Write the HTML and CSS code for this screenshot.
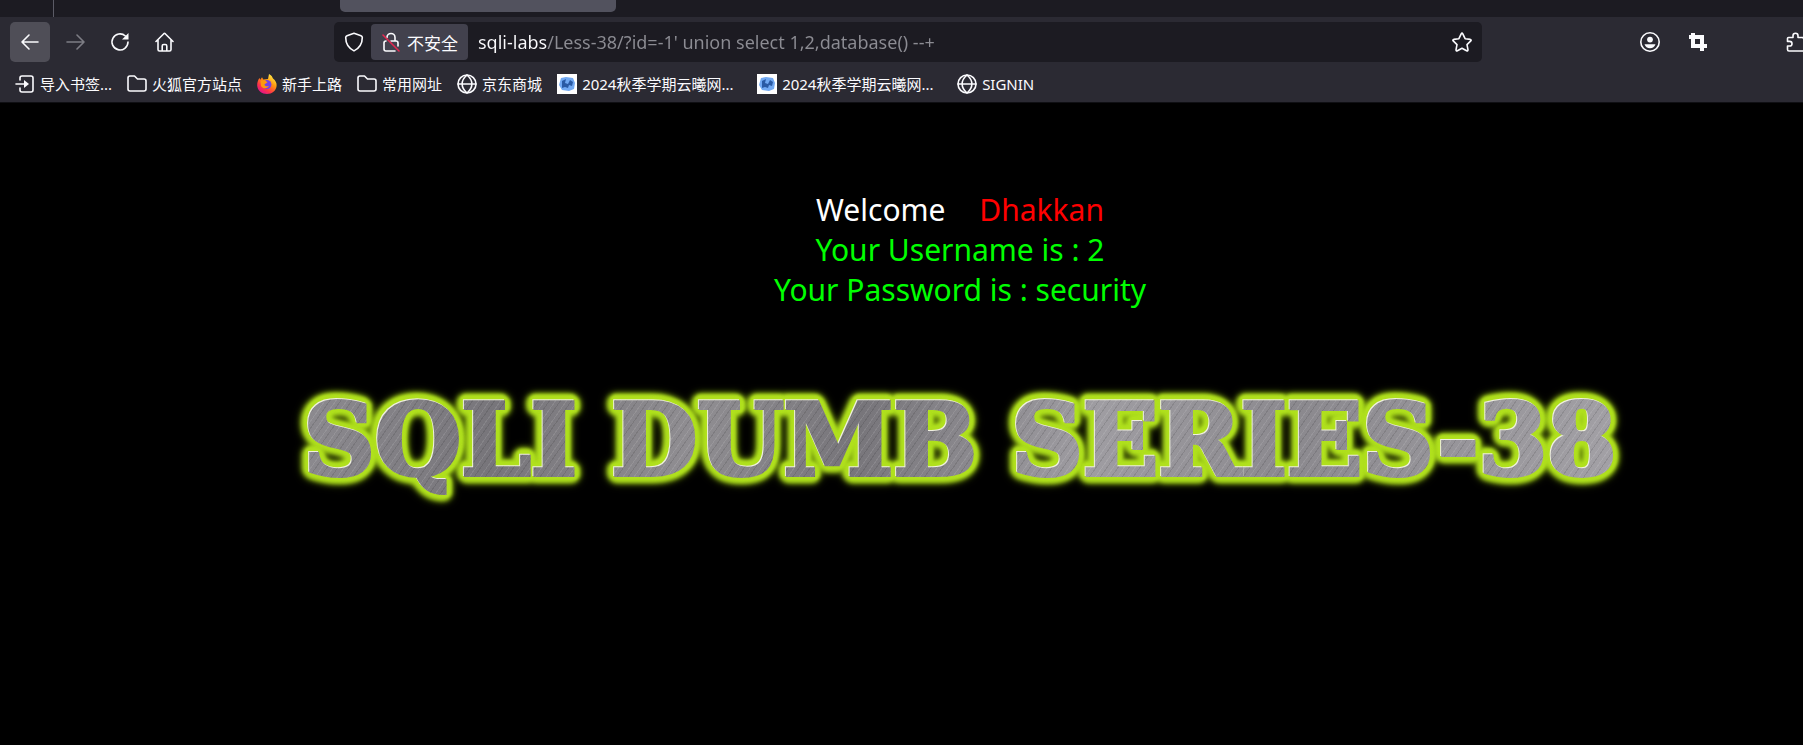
FILE: index.html
```html
<!DOCTYPE html>
<html lang="zh-CN">
<head>
  <meta charset="UTF-8">
  <meta name="viewport" content="width=device-width, initial-scale=1.0">
  <title>Less-38 **stacked Query**</title>
  <link rel="stylesheet" href="styles.css">
</head>
<body>
  <header class="browser">
    <div class="tabs">
      <span class="tab-pinned"></span>
      <span class="tab-active"></span>
    </div>
    <nav class="toolbar">
      <div class="nav-buttons">
        <button class="tool back" aria-label="后退">
          <svg class="icon" viewBox="0 0 20 20"><path d="M18 10H2M9 3l-7 7 7 7"/></svg>
        </button>
        <button class="tool" aria-label="前进" disabled>
          <svg class="icon" viewBox="0 0 20 20"><path d="M2 10h17M12 3l7 7-7 7"/></svg>
        </button>
        <button class="tool" aria-label="刷新">
          <svg class="icon" viewBox="0 0 20 20"><path d="M18 10a8 8 0 1 1-2.6-6"/><path class="solid" d="M18.500 1v6.500H12z"/></svg>
        </button>
        <button class="tool" aria-label="主页">
          <svg class="icon" viewBox="0 0 20 20"><path d="M1 9.500L8.800 1.700q.7-.6 1.400 0l7.800 7.800M3 8v9.500q0 1.500 1.500 1.500h10q1.500 0 1.500-1.500V8M7.200 19v-5q0-1.500 1.500-1.500h1.600q1.500 0 1.500 1.500v5"/></svg>
        </button>
      </div>
      <form class="urlbar">
        <svg class="icon shield" viewBox="0 0 20 20"><path d="M10 1.200l7 2.500q1.300.5 1.300 1.800c0 6-2.800 10.600-8.300 13.400C4.500 16.100 1.700 11.500 1.700 5.500q0-1.300 1.300-1.800z"/></svg>
        <button type="button" class="insecure">
          <svg class="icon" viewBox="0 0 20 20"><path d="M6 5.500a4 4 0 0 1 8 0V9M10 9h5q2 0 2 2v3M14 19H5q-2 0-2-2v-6q0-2 2-2"/><path class="slash" d="M2 3l16 16"/></svg>
          不安全
        </button>
        <input class="url" type="text" aria-label="网址" value="sqli-labs/Less-38/?id=-1' union select 1,2,database() --+">
        <button type="button" class="tool" aria-label="添加书签">
          <svg class="icon" viewBox="0 0 20 20"><path d="M9.200 1.800q.8-1.300 1.600 0l2.300 4.900 5.200.7q1.400.4.500 1.500L15 12.600l1 5.200q0 1.500-1.400.9L10 16.200l-4.600 2.500q-1.400.6-1.400-.9l1-5.200-3.800-3.700q-.9-1.100.5-1.500l5.200-.7z"/></svg>
        </button>
      </form>
      <div class="extras">
        <button class="tool" aria-label="账户">
          <svg class="icon" viewBox="0 0 20 20"><circle cx="10" cy="10" r="9.200"/><circle class="solid" cx="10" cy="7.600" r="2.900"/><path class="solid" d="M4.500 12.300h11q-1.400 3.900-5.500 3.900t-5.500-3.900z"/></svg>
        </button>
        <button class="tool" aria-label="截图">
          <svg class="icon crop" viewBox="0 0 20 20"><path d="M1 5h13v14M5 1v13h14"/></svg>
        </button>
        <button class="tool extension" aria-label="扩展">
          <svg class="icon" viewBox="0 0 20 20"><path d="M2.500 5.500H7V3.800a2.500 2.500 0 0 1 5 0v1.700h4q2 0 2 2V19H3q-1.500 0-1.500-1.500V14h2.200a2.300 2.300 0 0 0 0-4.600H1.500V6.500q0-1 1-1z"/></svg>
        </button>
      </div>
    </nav>
    <nav class="bookmarks">
      <a href="#"><svg class="icon" viewBox="0 0 20 20"><path d="M5 6V4q0-2 2-2h9q2 0 2 2v12q0 2-2 2H7q-2 0-2-2v-2M1 10h9"/><path class="solid" d="M9 6l5 4-5 4z"/></svg>导入书签...</a>
      <a href="#"><svg class="icon" viewBox="0 0 20 20"><path d="M3 2h4.500l3 3H17q2 0 2 2v8q0 2-2 2H3q-2 0-2-2V4q0-2 2-2z"/></svg>火狐官方站点</a>
      <a href="#"><svg class="icon firefox" viewBox="0 0 20 20">
        <defs>
          <linearGradient id="fire" x1=".85" y1=".05" x2=".25" y2=".95"><stop offset="0" stop-color="#fff44f"/><stop offset=".4" stop-color="#ff980e"/><stop offset=".75" stop-color="#ff3647"/><stop offset="1" stop-color="#e31587"/></linearGradient>
        </defs>
        <path fill="url(#fire)" d="M12 0c3 1.500 3.300 3.200 4 4.500C18.500 6.500 20 9 19.600 12 19 16.800 15 20 10 20S.4 16.500.2 11.500C.1 8.500 1 6 2.500 4l.8 1.800L5 3.200l1.300 2.300L11 5z"/>
        <circle cx="9.800" cy="10.500" r="4.600" fill="#7542e5"/>
        <path fill="#ff980e" d="M3.500 6.500L8 6l2.500 2.500-3 1.700c0 2 2.500 2.800 4.500 1.600-1 3-6 3.500-8 .2z"/>
      </svg>新手上路</a>
      <a href="#"><svg class="icon" viewBox="0 0 20 20"><path d="M3 2h4.500l3 3H17q2 0 2 2v8q0 2-2 2H3q-2 0-2-2V4q0-2 2-2z"/></svg>常用网址</a>
      <a href="#"><svg class="icon" viewBox="0 0 20 20"><circle cx="10" cy="10" r="9"/><path d="M1 10h18M10 1C3.500 6.500 3.500 13.500 10 19c6.500-5.500 6.500-12.500 0-18"/></svg>京东商城</a>
      <a href="#" class="long"><svg class="icon favicon" viewBox="0 0 20 20"><path fill="#fff" d="M0 0h20v20H0z"/><path fill="#72a9f3" d="M4 4l5-1 7 1 2 5-1 6-5 2-7-1-3-5z"/><path fill="#2a5aa5" d="M5 7l4-2-1 4 3 1 2-4 3 2-1 4-3-1-1 3-3-1-3 1z"/></svg>2024秋季学期云曦网...</a>
      <a href="#" class="long"><svg class="icon favicon" viewBox="0 0 20 20"><path fill="#fff" d="M0 0h20v20H0z"/><path fill="#72a9f3" d="M4 4l5-1 7 1 2 5-1 6-5 2-7-1-3-5z"/><path fill="#2a5aa5" d="M5 7l4-2-1 4 3 1 2-4 3 2-1 4-3-1-1 3-3-1-3 1z"/></svg>2024秋季学期云曦网...</a>
      <a href="#"><svg class="icon" viewBox="0 0 20 20"><circle cx="10" cy="10" r="9"/><path d="M1 10h18M10 1C3.500 6.500 3.500 13.500 10 19c6.500-5.500 6.500-12.500 0-18"/></svg>SIGNIN</a>
    </nav>
  </header>

  <main class="page">
    <div class="message">
      <p class="welcome">Welcome <span class="name">Dhakkan</span></p>
      <p>Your Username is : 2</p>
      <p>Your Password is : security</p>
    </div>
    <div class="banner">
      <h1>SQLI DUMB SERIES-38</h1>
    </div>
  </main>
</body>
</html>
```
FILE: styles.css
```css
* {
  box-sizing: border-box;
}
body {
  margin: 0;
  min-height: 100vh;
  background: #000;
  color: #fff;
  font-family: "Noto Sans", "Noto Sans CJK SC", sans-serif;
  overflow-x: hidden;
}
button {
  border: none;
  background: none;
  padding: 0;
  color: inherit;
  font: inherit;
}

/* browser chrome */
.browser {
  background: #2b2a33;
  color: #fbfbfe;
  border-bottom: 1px solid #0f0f13;
}
.tabs {
  display: flex;
  height: 17px;
  background: #1c1b22;
}
.tab-pinned {
  width: 54px;
  border-right: 1px solid #5b5b66;
}
.tab-active {
  width: 276px;
  height: 12px;
  margin-left: 286px;
  background: #52525e;
  border-radius: 0 0 5px 5px;
}
.toolbar {
  display: flex;
  padding: 5px 0 5px 10px;
  overflow: hidden;
}
.nav-buttons {
  display: flex;
  gap: 5px;
  width: 324px;
}
.tool {
  display: flex;
  flex: none;
  align-items: center;
  justify-content: center;
  width: 40px;
  height: 40px;
  border-radius: 5px;
}
.tool:disabled {
  color: #7d7d85;
}
.back {
  background: #4f4e57;
}
.icon {
  flex: none;
  width: 20px;
  height: 20px;
  fill: none;
  stroke: currentColor;
  stroke-width: 1.6;
  stroke-linecap: round;
  stroke-linejoin: round;
}
.icon .solid {
  fill: currentColor;
  stroke: none;
}
.icon .slash {
  stroke: #e22850;
}
.crop {
  stroke-width: 4;
  stroke-linecap: butt;
  stroke-linejoin: miter;
}
.urlbar {
  display: flex;
  flex: 1;
  align-items: center;
  height: 40px;
  padding-left: 10px;
  background: #1c1b22;
  border-radius: 5px;
}
.shield {
  margin-right: 7px;
}
.insecure {
  display: flex;
  align-items: center;
  gap: 6px;
  height: 36px;
  padding: 0 10px;
  background: #42414d;
  border-radius: 4px;
  font-size: 17px;
}
.url {
  flex: 1;
  height: 30px;
  padding: 0 10px;
  border: none;
  outline: none;
  font-family: inherit;
  font-size: 18px;
  /* host in white, rest of the address dimmed */
  background: linear-gradient(90deg, #fbfbfe 79px, #8c8c93 79px);
  background-clip: text;
  -webkit-background-clip: text;
  color: transparent;
}
.extras {
  display: flex;
  width: 321px;
  padding-left: 148px;
  gap: 8px;
}
.extension {
  margin-left: 50px;
}
.bookmarks {
  display: flex;
  align-items: center;
  gap: 15px;
  padding: 0 15px 2px;
}
.bookmarks a {
  display: flex;
  align-items: center;
  gap: 5px;
  height: 33px;
  color: inherit;
  font-size: 15px;
  text-decoration: none;
  white-space: nowrap;
}
.bookmarks .long {
  width: 185px;
}
.firefox,
.favicon {
  stroke: none;
}

/* page */
.page {
  padding: 87px 0 0 117px;
}
.message {
  text-align: center;
  font-size: 30px;
  line-height: 40px;
}
.message p {
  margin: 0;
  color: #0f0;
}
.message .welcome {
  color: #fff;
}
.name {
  margin-left: 26px;
  color: #f00;
}
.banner {
  margin-top: 74px;
  text-align: center;
  white-space: nowrap;
  /* light bevel, then the glow grown in four directions */
  filter:
    drop-shadow(-1px -1px 0 #f0f0e0)
    drop-shadow(2px 2px 1px #b0e01e)
    drop-shadow(-2px -2px 1px #b0e01e)
    drop-shadow(2px -2px 1px #b0e01e)
    drop-shadow(-2px 2px 2px #b0e01e)
    drop-shadow(0 0 2px #a4d41a)
    drop-shadow(0 0 3px #8ab410);
}
.banner h1 {
  display: inline-block;
  margin: 0;
  font-family: "DejaVu Serif", serif;
  font-size: 99px;
  font-weight: bold;
  line-height: 112px;
  color: transparent;
  -webkit-text-stroke: 4px transparent;
  background:
    repeating-linear-gradient(125deg, rgba(255,255,255,0.1) 0 1px, transparent 1px 4px, rgba(0,0,0,0.1) 4px 5px, transparent 5px 9px),
    linear-gradient(100deg, #8d8b90, #77757a 15%, #908e92 30%, #77757a 42%, #9f9da2 60%, #8b898e 75%, #a3a1a6);
  background-clip: text;
  -webkit-background-clip: text;
}
```
